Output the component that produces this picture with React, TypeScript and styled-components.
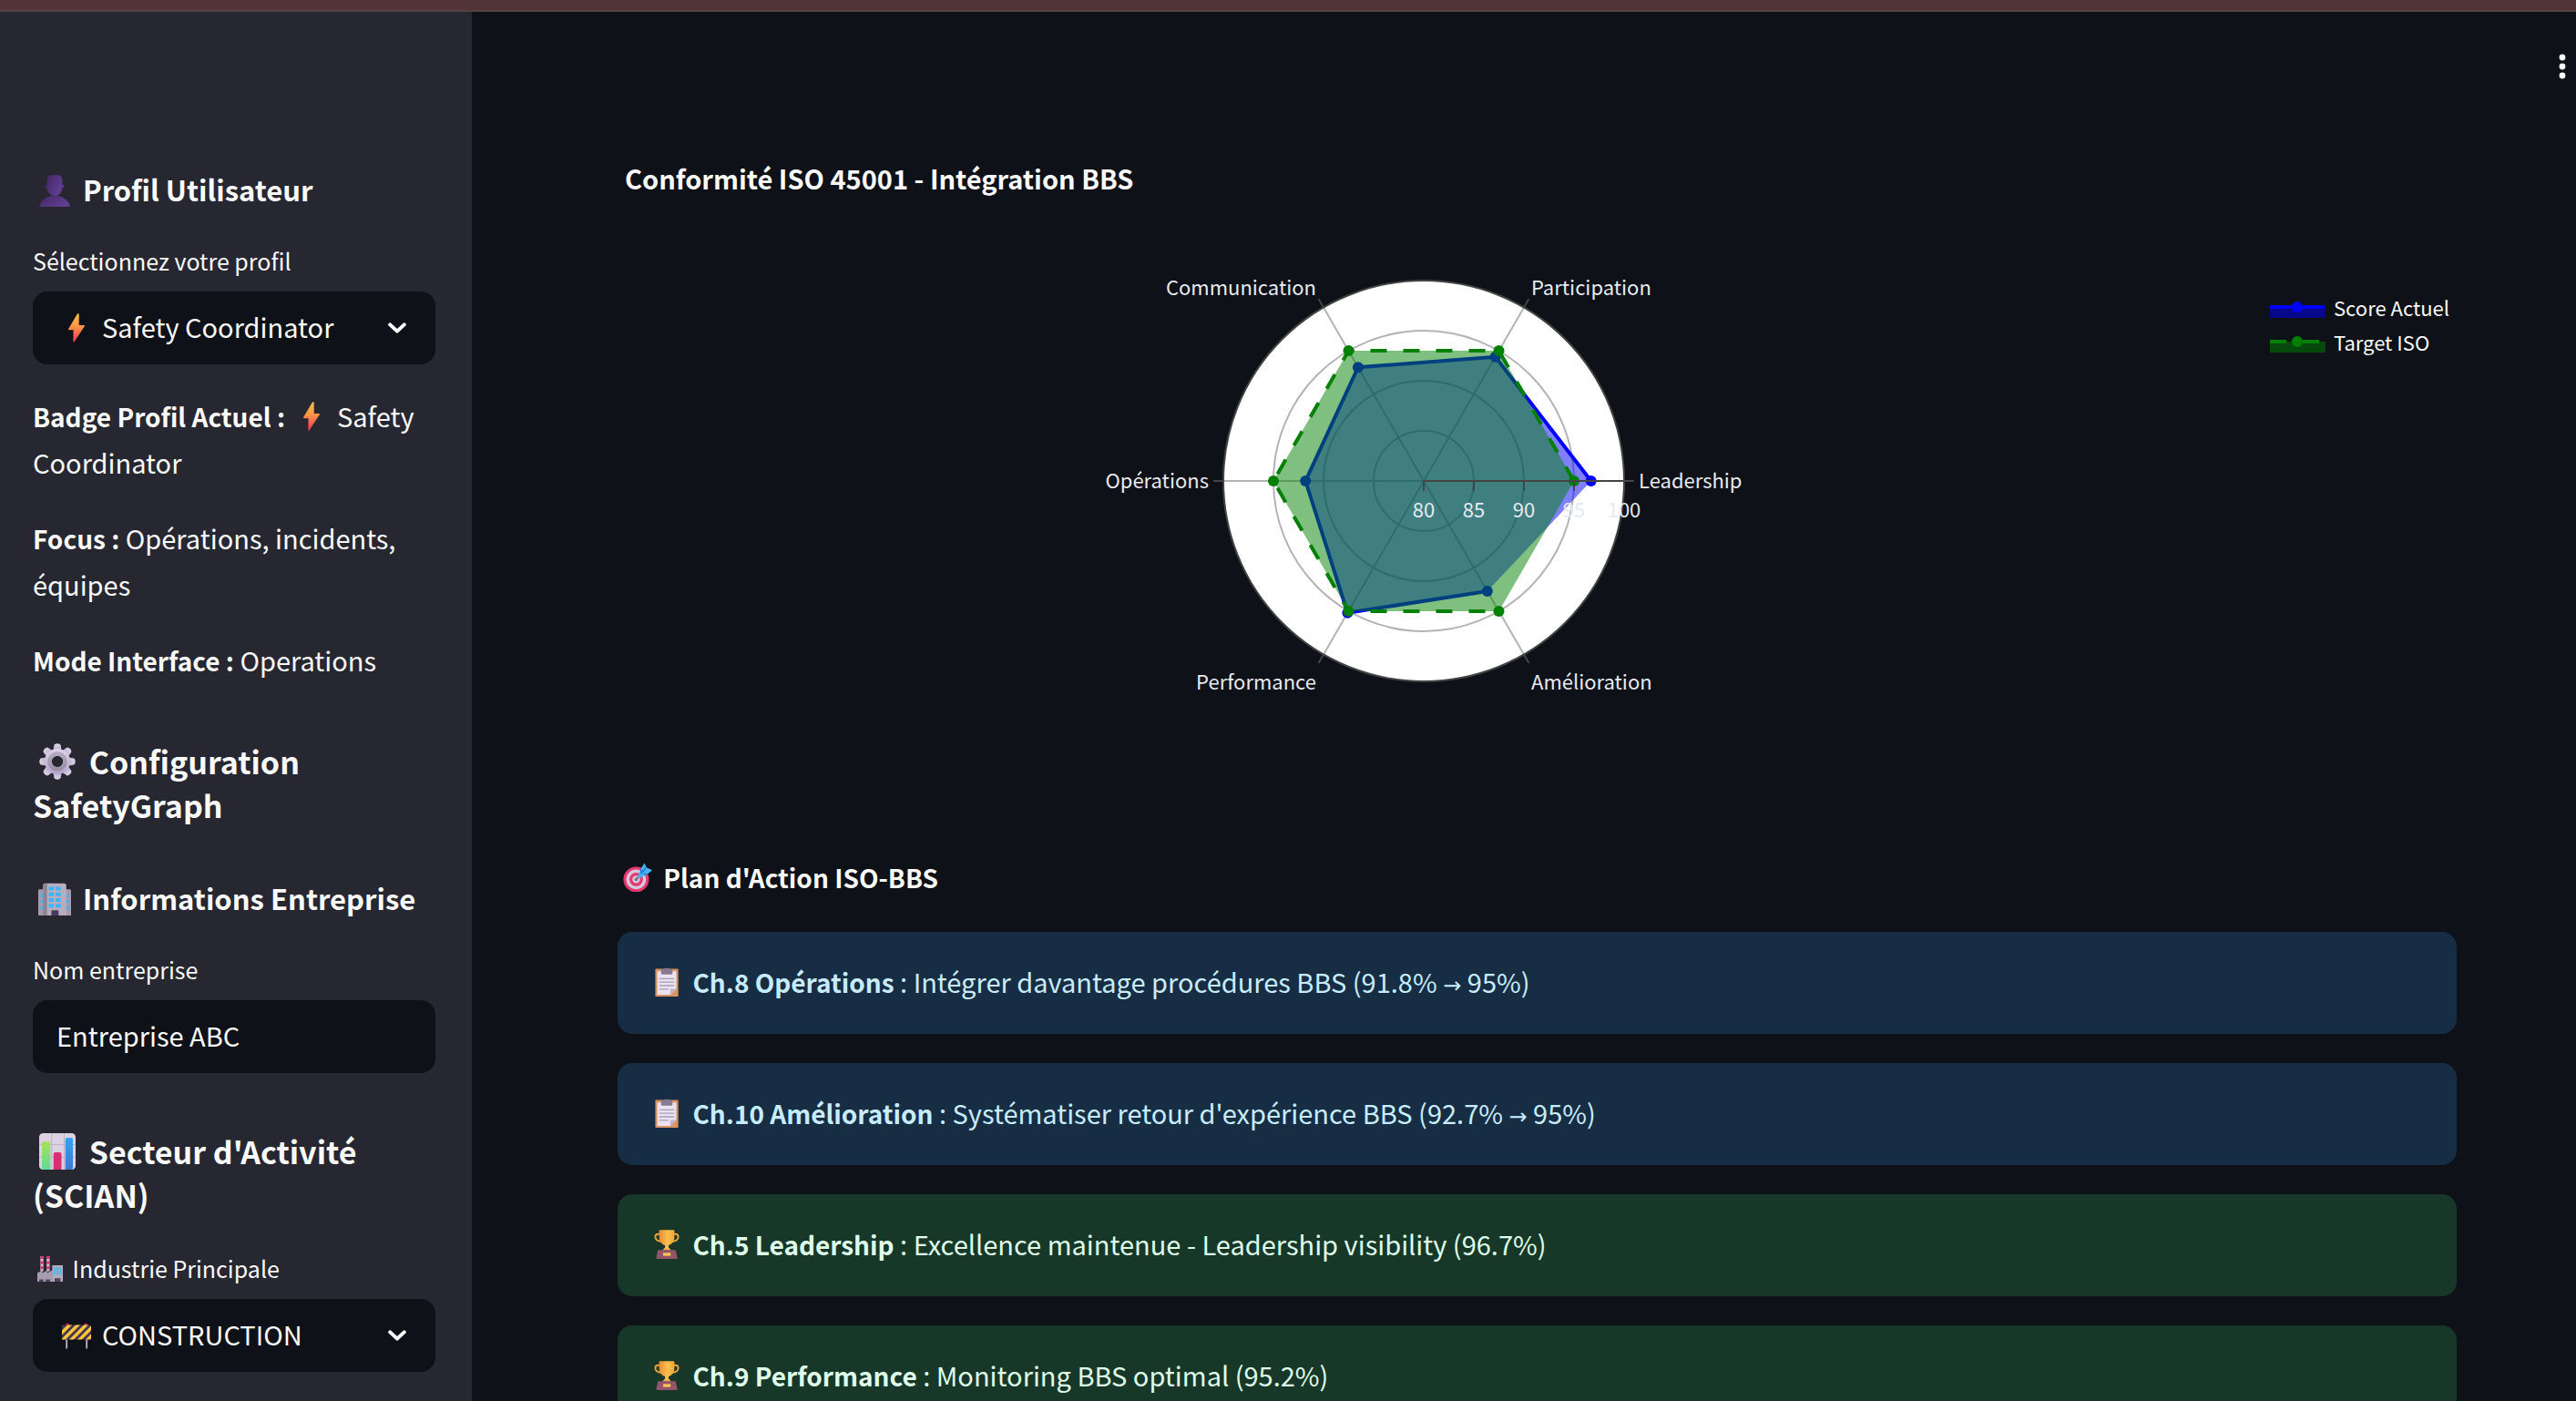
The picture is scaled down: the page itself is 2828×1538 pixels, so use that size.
import React from "react";
import styled, { createGlobalStyle } from "styled-components";

const FONT = `"Noto Sans CJK SC", "Noto Sans", sans-serif`;

const GlobalStyle = createGlobalStyle`
  *, *::before, *::after { box-sizing: border-box; }
  body {
    margin: 0;
    background: #0e1117;
    color: #fafafa;
    font-family: ${FONT};
    font-size: 29px;
  }
  h2, h3, h4, p { margin: 0; }
  strong { font-size: 28px; line-height: 28px; font-weight: 600; }
`;

/* ---------- page shell ---------- */

const Page = styled.div`
  display: flex;
  flex-direction: column;
  height: 100vh;
  overflow: hidden;
`;

const TopStrip = styled.div`
  flex: none;
  height: 13px;
  background: #523439;
  border-bottom: 2px solid #544242;
`;

const Columns = styled.div`
  flex: 1;
  min-height: 0;
  display: flex;
`;

const Sidebar = styled.aside`
  flex: none;
  width: 518px;
  padding: 173px 40px 40px 36px;
  background: #262730;
  overflow-y: auto;
  scrollbar-width: none;
`;

const Main = styled.main`
  flex: 1;
  min-width: 0;
  overflow-y: auto;
  scrollbar-width: none;
`;

const Header = styled.header`
  display: flex;
  justify-content: flex-end;
  align-items: center;
  height: 120px;
  padding-right: 3px;
`;

const MenuButton = styled.button`
  display: flex;
  justify-content: center;
  width: 24px;
  padding: 8px 0;
  border: 0;
  background: none;
  color: #fafafa;
  cursor: pointer;
`;

const Content = styled.div`
  padding: 42px 131px 80px 160px;
`;

/* ---------- sidebar parts ---------- */

const SectionTitle = styled.h2<{ $followedByGroup?: boolean }>`
  margin: 62px 0 ${(p) => (p.$followedByGroup ? 56 : 40)}px;
  font-size: 34px;
  line-height: 48px;
  font-weight: 600;
`;

const GroupTitle = styled.h3`
  margin-bottom: 40px;
  font-size: 31px;
  line-height: 44px;
  font-weight: 600;
`;

const Field = styled.div`
  display: flex;
  flex-direction: column;
  gap: 18px;
`;

const Label = styled.label`
  font-size: 25px;
  line-height: 32px;
`;

const Control = styled.div`
  display: grid;
  align-items: center;

  > * {
    grid-area: 1 / 1;
  }
`;

const Adornment = styled.span<{ $end?: boolean }>`
  z-index: 1;
  display: flex;
  justify-self: ${(p) => (p.$end ? "end" : "start")};
  padding: ${(p) => (p.$end ? "0 32px 0 0" : "0 0 0 26px")};
  pointer-events: none;
`;

const controlBox = `
  width: 100%;
  height: 80px;
  border: 0;
  border-radius: 16px;
  background: #0e1117;
  color: #fafafa;
  font-family: ${FONT};
  font-size: 29px;
  appearance: none;
`;

const Select = styled.select`
  ${controlBox}
  padding: 0 80px 4px 76px;
`;

const TextInput = styled.input`
  ${controlBox}
  padding: 0 26px 4px 26px;
`;

const ProfileInfo = styled.div`
  display: flex;
  flex-direction: column;
  gap: 32px;
  margin-top: 31px;
  line-height: 51px;
`;

/* ---------- chart parts ---------- */

const Figure = styled.section``;

const FigureTitle = styled.h4`
  padding-left: 8px;
  font-size: 29px;
  line-height: 40px;
  font-weight: 700;
`;

const FigureBody = styled.div`
  display: flex;
  align-items: flex-start;
  padding: 73px 0 175px;
`;

const Plot = styled.div`
  flex: 1;
  min-width: 0;
  display: flex;
  justify-content: center;
`;

const RadarSvg = styled.svg`
  width: 760px;
  max-width: 100%;
  height: auto;
  font-family: ${FONT};
  font-size: 22px;
  fill: #e6eaf1;
`;

const Legend = styled.ul`
  flex: none;
  width: 249px;
  margin: 0;
  padding: 30px 0 0 44px;
  list-style: none;
`;

const LegendItem = styled.li`
  display: flex;
  align-items: center;
  gap: 9px;
  font-size: 22px;
  line-height: 38px;
  white-space: nowrap;
`;

/* ---------- action plan parts ---------- */

const PlanTitle = styled.h4`
  margin-bottom: 40px;
  font-size: 28px;
  line-height: 40px;
  font-weight: 600;
`;

const AlertList = styled.div`
  display: flex;
  flex-direction: column;
  gap: 32px;
`;

const Alert = styled.div<{ $tone: "info" | "success" }>`
  padding: 28px 32px 32px;
  border-radius: 16px;
  line-height: 52px;
  background: ${(p) => (p.$tone === "info" ? "#172d43" : "#173828")};
  color: ${(p) => (p.$tone === "info" ? "#c7ebff" : "#dffde9")};
`;

const Arrow = styled.span`
  font-family: "DejaVu Sans", sans-serif;
  font-size: 24px;
  line-height: 24px;
`;

/* ---------- pictograms ---------- */

const Glyph = styled.svg<{ $size: number }>`
  width: ${(p) => p.$size}px;
  height: ${(p) => p.$size}px;
  margin: 0 ${(p) => (p.$size > 36 ? 7 : p.$size < 32 ? 5 : 6)}px;
  vertical-align: ${(p) => (p.$size > 32 ? -6 : -4)}px;
`;

type GlyphProps = { size?: number };

const Bust = ({ size = 36 }: GlyphProps) => (
  <Glyph $size={size} viewBox="0 0 32 32" aria-hidden="true">
    <defs>
      <linearGradient id="bust" x1="0" y1="0" x2="1" y2="0.6">
        <stop offset="0" stopColor="#432666" />
        <stop offset="1" stopColor="#613f93" />
      </linearGradient>
    </defs>
    <circle cx="8.2" cy="12" r="1.6" fill="#432666" />
    <circle cx="24" cy="12" r="1.6" fill="#563684" />
    <path d="M8.4 6C8.4 2.600 10.400 1 13 1h6c2.800 0 4.400 1.800 4.400 5v6.500c0 5-3.200 9-7.400 9s-7.600-4-7.600-9Z" fill="url(#bust)" />
    <path d="M1.200 31c1.400-5.600 7.600-9.800 14.800-9.800S29.400 25.400 30.800 31c.1.600-.2 1-.8 1H2c-.6 0-.9-.4-.8-1Z" fill="url(#bust)" />
  </Glyph>
);

const Bolt = ({ size = 32 }: GlyphProps) => (
  <Glyph $size={size} viewBox="0 0 32 32" aria-hidden="true">
    <defs>
      <linearGradient id="bolt" x1="0" y1="0" x2="0" y2="1">
        <stop offset="0" stopColor="#ffbe4a" />
        <stop offset="0.45" stopColor="#ff9544" />
        <stop offset="1" stopColor="#f0335a" />
      </linearGradient>
    </defs>
    <path d="M16.800.800 7 17.200c-.3.500 0 1 .6 1h5l-.3 12.300c0 1 1 1.300 1.500.4L24.900 14c.3-.5 0-1-.6-1h-5.600V1.400c0-1.100-1.300-1.500-1.900-.6Z" fill="url(#bolt)" />
  </Glyph>
);

const Gear = ({ size = 40 }: GlyphProps) => (
  <Glyph $size={size} viewBox="0 0 32 32" aria-hidden="true">
    <defs>
      <linearGradient id="gear" x1="0" y1="0" x2="0" y2="1">
        <stop offset="0" stopColor="#dcd5e6" />
        <stop offset="1" stopColor="#b7a3cf" />
      </linearGradient>
      <linearGradient id="gearRing" x1="0" y1="0" x2="0" y2="1">
        <stop offset="0" stopColor="#b3aac0" />
        <stop offset="1" stopColor="#9b8fa6" />
      </linearGradient>
    </defs>
    <g fill="url(#gear)">
      {[0, 45, 90, 135, 180, 225, 270, 315].map((a) => (
        <path key={a} d="M13 2.200c0-2.600 6-2.600 6 0l1 6h-8Z" transform={`rotate(${a} 16 16)`} />
      ))}
      <path fillRule="evenodd" d="M16 4.800a11.200 11.200 0 1 0 0 22.400 11.200 11.200 0 0 0 0-22.400Zm0 6.200a5 5 0 1 1 0 10 5 5 0 0 1 0-10Z" />
    </g>
    <circle cx="16" cy="16" r="6.800" fill="none" stroke="url(#gearRing)" strokeWidth="3.600" />
  </Glyph>
);

const Office = ({ size = 36 }: GlyphProps) => (
  <Glyph $size={size} viewBox="0 0 32 32" aria-hidden="true">
    <path d="M0 8c0-1 .6-1.600 1.600-1.600h28.800c1 0 1.600.6 1.600 1.600v24H0Z" fill="#a69bac" />
    <path d="M4.600 3c0-1.600.8-2.400 2.400-2.400h18c1.600 0 2.400.8 2.400 2.400v29H4.600Z" fill="#b8adc0" />
    <path d="M4.600 3c0-1.600.8-2.400 2.400-2.400h1.600V32h-4Z" fill="#8f8496" />
    <g fill="#38b6f8">
      {[4, 9.6, 15.2, 20.8].map((y) => (
        <g key={y}>
          <rect x="10.200" y={y} width="5" height="3.400" />
          <rect x="17" y={y} width="5" height="3.400" />
        </g>
      ))}
      {[11, 17, 23].map((y) => (
        <g key={y}>
          <rect x="2.400" y={y} width="2.200" height="3.200" />
          <rect x="27.600" y={y} width="2.200" height="3.200" />
        </g>
      ))}
    </g>
    <path d="M12.800 32v-4c0-.8.500-1.200 1.200-1.200h4.600c.7 0 1.200.4 1.200 1.200v4Z" fill="#4a3a5e" />
  </Glyph>
);

const BarChart = ({ size = 40 }: GlyphProps) => (
  <Glyph $size={size} viewBox="0 0 32 32" aria-hidden="true">
    <defs>
      <linearGradient id="barGreen" x1="0" y1="0" x2="0" y2="1">
        <stop offset="0" stopColor="#a8e05a" />
        <stop offset="1" stopColor="#5fdb98" />
      </linearGradient>
      <linearGradient id="barBlue" x1="0" y1="0" x2="0" y2="1">
        <stop offset="0" stopColor="#35a3f3" />
        <stop offset="1" stopColor="#3b7bd2" />
      </linearGradient>
    </defs>
    <rect width="32" height="32" rx="3.500" fill="#dcd2e4" />
    <path d="M11 0v32M22 0v32M0 10h32M0 21h32" stroke="#bdb2c6" strokeWidth=".8" />
    <path d="M2.400 9c0-1 .6-1.600 1.600-1.600h4.200c1 0 1.600.6 1.600 1.600v23H4c-1 0-1.600-.6-1.600-1.600Z" fill="url(#barGreen)" />
    <path d="M12.600 18.400c0-1 .6-1.600 1.600-1.600H18c1 0 1.600.6 1.600 1.600V32h-7Z" fill="#dd2d72" />
    <path d="M23 5.600C23 4.600 23.600 4 24.600 4H28c1 0 1.600.6 1.600 1.600v24.800c0 1-.6 1.600-1.600 1.600h-5Z" fill="url(#barBlue)" />
  </Glyph>
);

const Factory = ({ size = 28 }: GlyphProps) => (
  <Glyph $size={size} viewBox="0 0 32 32" aria-hidden="true">
    <rect x="3.800" y="0" width="3.800" height="19" fill="#c9bfd0" />
    <rect x="11.600" y="0" width="3.800" height="19" fill="#c9bfd0" />
    {[0, 6.4, 12.8].map((y) => (
      <g key={y} fill="#d6336c">
        <rect x="3.800" y={y} width="3.800" height="3.400" />
        <rect x="11.600" y={y} width="3.800" height="3.400" />
      </g>
    ))}
    <path d="M0 21l6.400-3.200V21l6-3.200V21l6.600-3.600V32H0Z" fill="#a79dae" />
    <rect x="18.600" y="11.400" width="13.400" height="20.600" fill="#b4abbb" />
    <path d="M20.600 14.400h9.600v9h-9.600Z" fill="#3fbcf7" />
    <path d="M23.500 14v10M27.200 14v10M20 17.400h11M20 20.400h11" stroke="#b4abbb" strokeWidth=".8" />
    <path d="M2.400 32v-3h5.200v3ZM10.400 32v-3h5.600v3ZM21.600 32v-4.400H29V32Z" fill="#4f4160" />
  </Glyph>
);

const Barrier = ({ size = 32 }: GlyphProps) => (
  <Glyph $size={size} viewBox="0 0 32 32" aria-hidden="true">
    <defs>
      <clipPath id="plank">
        <rect x="0" y="4.600" width="32" height="16" rx="1.200" />
      </clipPath>
    </defs>
    <circle cx="6" cy="4.400" r="2" fill="#d8125e" />
    <circle cx="26" cy="4.400" r="2" fill="#d8125e" />
    <path d="M4.200 20h1.900v10.400H4.200ZM26.200 20h1.900v10.400h-1.900Z" fill="#b9a6c2" />
    <g clipPath="url(#plank)">
      <rect y="4" width="32" height="17" fill="#473a4f" />
      <path d="M-3 16 10 3M-2 24 19 3M6 25 29 2M15 25 38 2M24 25 42 7" stroke="#ffc53d" strokeWidth="3.400" />
    </g>
  </Glyph>
);

const Target = ({ size = 32 }: GlyphProps) => (
  <Glyph $size={size} viewBox="0 0 32 32" aria-hidden="true">
    <circle cx="14.400" cy="18.400" r="14" fill="#e5386d" />
    <circle cx="14.400" cy="18.400" r="10.800" fill="#d5c8e0" />
    <circle cx="14.400" cy="18.400" r="7.400" fill="#e5386d" />
    <circle cx="14.400" cy="18.400" r="4.200" fill="#d5c8e0" />
    <circle cx="14.400" cy="18.400" r="1.800" fill="#7d7288" />
    <path d="M14.400 18.400 24 8.500" stroke="#7d7288" strokeWidth="1.800" />
    <path d="M16.600 14.200 19.200 7 23.600.6l2 4.600 6.400 3-6 5-7 3.400c-1.600.6-2.800-.8-2.400-2.400Z" fill="#43b4f5" />
    <path d="M25.600 5.200 19.400 12M19.200 7l1.200 3.600M26 13.200l-3.200-1.400" stroke="#2173d8" strokeWidth="1.400" />
  </Glyph>
);

const Clipboard = () => (
  <Glyph $size={32} viewBox="0 0 32 32" aria-hidden="true">
    <rect x="3.400" y="1.600" width="25.200" height="30.400" rx="1" fill="#db9461" />
    <path d="M5.600 4.200h20.800v19.200l-6.600 6.600H5.600Z" fill="#eae2f1" />
    <path d="M26.400 23.400h-5.400c-.8 0-1.200.4-1.200 1.200V30Z" fill="#c2b3cc" />
    <path d="M13.200 1.400C13.200.4 18.800.4 18.800 1.400l2.800.8c.3 0 .6.300.6.700v3.300c0 1-.6 1.600-1.600 1.600h-9.200c-1 0-1.600-.6-1.600-1.600V2.900c0-.4.300-.7.600-.7Z" fill="#887b91" />
    <path d="M7.800 12.400h16.400M7.800 16.200h16.400M7.800 20h16.400M7.800 23.800h10" stroke="#a99db3" strokeWidth="1.300" />
  </Glyph>
);

const Trophy = () => (
  <Glyph $size={32} viewBox="0 0 32 32" aria-hidden="true">
    <defs>
      <linearGradient id="cup" x1="0" y1="0" x2="1" y2="0">
        <stop offset="0" stopColor="#e88b34" />
        <stop offset="0.550" stopColor="#fbc04b" />
        <stop offset="1" stopColor="#f0a63a" />
      </linearGradient>
    </defs>
    <path d="M9 4.800H6.600c-2 0-3.200 1.200-3.200 3 0 3.200 2.600 4.800 7 5.200M23 4.800h2.400c2 0 3.200 1.200 3.200 3 0 3.200-2.600 4.800-7 5.200" fill="none" stroke="#eda63c" strokeWidth="1.900" />
    <path d="M7.600 1.200c0-.6.300-.9.900-.9h15c.6 0 .9.300.9.900v6.600c0 4.800-2.400 8-6.400 9.200v2.400l3 3H11l3-3V17c-4-1.200-6.400-4.400-6.400-9.200Z" fill="url(#cup)" />
    <path d="M7 22.200h18c.5 0 .8.200.9.700L27.600 31c.1.600-.2 1-.8 1H5.200c-.6 0-.9-.4-.8-1l1.700-8.100c.1-.5.400-.7.900-.7Z" fill="#96546c" />
    <rect x="12" y="25.400" width="8.200" height="3.200" fill="#ffca4f" />
  </Glyph>
);

const Chevron = () => (
  <svg width="20" height="12" viewBox="0 0 20 12" aria-hidden="true">
    <path d="M2.200 2.400 10 9.600l7.800-7.200" fill="none" stroke="#fafafa" strokeWidth="4" strokeLinecap="round" strokeLinejoin="round" />
  </svg>
);

/* ---------- radar chart ---------- */

const AXES = ["Leadership", "Participation", "Communication", "Opérations", "Performance", "Amélioration"];
const SCORES = [96.7, 94.3, 93.1, 91.8, 95.2, 92.7];
const TARGETS = [95, 95, 95, 95, 95, 95];
const TICKS = [80, 85, 90, 95, 100];

const CX = 380;
const CY = 240;
const RADIUS = 220;

const at = (index: number, r: number): [number, number] => {
  const angle = (index * Math.PI) / 3;
  return [CX + r * Math.cos(angle), CY - r * Math.sin(angle)];
};

const scale = (value: number) => ((value - 80) / 20) * RADIUS;

/* baseline shift of an axis name: above, beside or below the disc */
const nameShift = (index: number) => {
  const lean = Math.round(Math.sin((index * Math.PI) / 3));
  return lean > 0 ? 0 : lean < 0 ? 25 : 8;
};

const Trace = ({ values, color, dashed }: { values: number[]; color: string; dashed?: boolean }) => {
  const points = values.map((v, i) => at(i, scale(v)));
  const path = points.map((p) => p.join(",")).join(" ");
  return (
    <g>
      <polygon points={path} fill={color} fillOpacity={0.5} />
      <polyline points={path} fill="none" stroke={color} strokeWidth={4} strokeDasharray={dashed ? "18 18" : undefined} />
      {points.map(([x, y], i) => (
        <circle key={i} cx={x} cy={y} r={6} fill={color} />
      ))}
    </g>
  );
};

const Radar = () => (
  <RadarSvg viewBox="0 0 760 480" role="img" aria-label="Conformité ISO 45001">
    <circle cx={CX} cy={CY} r={RADIUS} fill="#fff" />
    {AXES.map((name, i) => {
      const [x, y] = at(i, RADIUS);
      return <line key={name} x1={CX} y1={CY} x2={x} y2={y} stroke="#b4b4b4" strokeWidth={2} />;
    })}
    {TICKS.slice(1, 4).map((t) => (
      <circle key={t} cx={CX} cy={CY} r={scale(t)} fill="none" stroke="#b4b4b4" strokeWidth={2} />
    ))}
    <Trace values={SCORES} color="#0000ff" />
    <Trace values={TARGETS} color="#008000" dashed />
    <circle cx={CX} cy={CY} r={RADIUS} fill="none" stroke="#444" strokeWidth={2} />
    {AXES.map((name, i) => {
      const [x1, y1] = at(i, RADIUS);
      const [x2, y2] = at(i, RADIUS + 11);
      const [lx, ly] = at(i, RADIUS + 16);
      return (
        <g key={name}>
          <line x1={x1} y1={y1} x2={x2} y2={y2} stroke="#444" strokeWidth={2} />
          <text x={lx} y={ly + nameShift(i)} textAnchor={lx > CX ? "start" : "end"}>
            {name}
          </text>
        </g>
      );
    })}
    <line x1={CX} y1={CY} x2={CX + RADIUS} y2={CY} stroke="#444" strokeWidth={2} />
    {TICKS.map((t) => (
      <g key={t}>
        <line x1={CX + scale(t)} y1={CY} x2={CX + scale(t)} y2={CY + 11} stroke="#444" strokeWidth={2} />
        <text x={CX + scale(t)} y={CY + 40} textAnchor="middle">
          {t}
        </text>
      </g>
    ))}
  </RadarSvg>
);

const Swatch = ({ color, dashed }: { color: string; dashed?: boolean }) => (
  <svg width="61" height="26" viewBox="0 0 61 26" aria-hidden="true">
    <rect y="13" width="61" height="12" fill={color} fillOpacity={0.5} />
    <line x1="0" y1="13" x2="60" y2="13" stroke={color} strokeWidth={4} strokeDasharray={dashed ? "18 18" : undefined} />
    <circle cx="30" cy="13" r="6" fill={color} />
  </svg>
);

/* ---------- content ---------- */

type Action = { tone: "info" | "success"; name: string; text: string; goal?: string };

const ACTIONS: Action[] = [
  { tone: "info", name: "Ch.8 Opérations", text: "Intégrer davantage procédures BBS (91.8%", goal: "95%)" },
  { tone: "info", name: "Ch.10 Amélioration", text: "Systématiser retour d'expérience BBS (92.7%", goal: "95%)" },
  { tone: "success", name: "Ch.5 Leadership", text: "Excellence maintenue - Leadership visibility (96.7%)" },
  { tone: "success", name: "Ch.9 Performance", text: "Monitoring BBS optimal (95.2%)" },
];

export default function App() {
  return (
    <Page lang="fr">
      <GlobalStyle />
      <TopStrip />
      <Columns>
        <Sidebar>
          <GroupTitle>
            <Bust /> Profil Utilisateur
          </GroupTitle>
          <Field>
            <Label htmlFor="profile">Sélectionnez votre profil</Label>
            <Control>
              <Select id="profile" defaultValue="coordinator">
                <option value="coordinator">Safety Coordinator</option>
              </Select>
              <Adornment>
                <Bolt />
              </Adornment>
              <Adornment $end>
                <Chevron />
              </Adornment>
            </Control>
          </Field>
          <ProfileInfo>
            <p>
              <strong>Badge Profil Actuel :</strong> <Bolt /> Safety Coordinator
            </p>
            <p>
              <strong>Focus :</strong> Opérations, incidents, équipes
            </p>
            <p>
              <strong>Mode Interface :</strong> Operations
            </p>
          </ProfileInfo>

          <SectionTitle $followedByGroup>
            <Gear /> Configuration SafetyGraph
          </SectionTitle>
          <GroupTitle>
            <Office /> Informations Entreprise
          </GroupTitle>
          <Field>
            <Label htmlFor="company">Nom entreprise</Label>
            <TextInput id="company" type="text" defaultValue="Entreprise ABC" />
          </Field>

          <SectionTitle>
            <BarChart /> Secteur d'Activité (SCIAN)
          </SectionTitle>
          <Field>
            <Label htmlFor="industry">
              <Factory /> Industrie Principale
            </Label>
            <Control>
              <Select id="industry" defaultValue="construction">
                <option value="construction">CONSTRUCTION</option>
              </Select>
              <Adornment>
                <Barrier />
              </Adornment>
              <Adornment $end>
                <Chevron />
              </Adornment>
            </Control>
          </Field>
        </Sidebar>

        <Main>
          <Header>
            <MenuButton type="button" aria-label="Menu">
              <svg width="8" height="28" viewBox="0 0 8 28" fill="currentColor" aria-hidden="true">
                <circle cx="4" cy="4" r="3.400" />
                <circle cx="4" cy="14" r="3.400" />
                <circle cx="4" cy="24" r="3.400" />
              </svg>
            </MenuButton>
          </Header>
          <Content>
            <Figure>
              <FigureTitle>Conformité ISO 45001 - Intégration BBS</FigureTitle>
              <FigureBody>
                <Plot>
                  <Radar />
                </Plot>
                <Legend>
                  <LegendItem>
                    <Swatch color="#0000ff" /> Score Actuel
                  </LegendItem>
                  <LegendItem>
                    <Swatch color="#008000" dashed /> Target ISO
                  </LegendItem>
                </Legend>
              </FigureBody>
            </Figure>
            <PlanTitle>
              <Target /> Plan d'Action ISO-BBS
            </PlanTitle>
            <AlertList>
              {ACTIONS.map((a) => (
                <Alert key={a.name} $tone={a.tone}>
                  {a.tone === "info" ? <Clipboard /> : <Trophy />} <strong>{a.name}</strong> : {a.text}
                  {a.goal && (
                    <>
                      {" "}
                      <Arrow>→</Arrow> {a.goal}
                    </>
                  )}
                </Alert>
              ))}
            </AlertList>
          </Content>
        </Main>
      </Columns>
    </Page>
  );
}
